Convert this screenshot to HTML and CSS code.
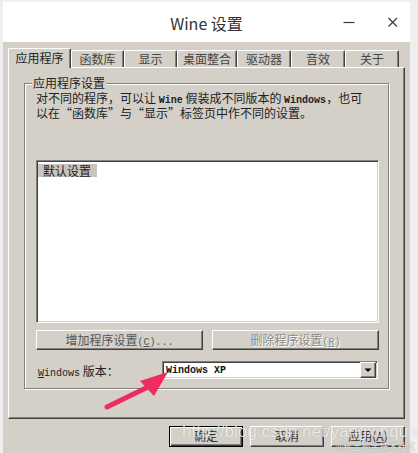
FILE: index.html
```html
<!DOCTYPE html>
<html lang="zh-CN">
<head>
<meta charset="utf-8">
<title>Wine 设置</title>
<link rel="stylesheet" href="styles.css">
</head>
<body>
<div class="window">
  <div class="titlebar">
    <div></div>
    <div class="title">Wine 设置</div>
    <div class="controls">
      <svg class="ctl" width="24" height="24" viewBox="0 0 24 24"><path d="M6.5 12.5H17.5" stroke="#3a3a3a" stroke-width="1.2"/></svg>
      <svg class="ctl" width="24" height="24" viewBox="0 0 24 24"><path d="M7.5 8L16 16.5M16 8L7.5 16.5" stroke="#3a3a3a" stroke-width="1.2"/></svg>
    </div>
  </div>
  <div class="client">
    <div class="tabs">
      <div class="tab active t63">应用程序</div>
      <div class="tab t53">函数库</div>
      <div class="tab t53">显示</div>
      <div class="tab t60">桌面整合</div>
      <div class="tab t54">驱动器</div>
      <div class="tab t54">音效</div>
      <div class="tab t54">关于</div>
    </div>
    <div class="panel">
      <fieldset class="group">
        <legend class="legend">应用程序设置</legend>
        <p class="desc">对不同的程序，可以让 <b class="mono">Wine</b> 假装成不同版本的 <b class="mono">Windows</b>，也可<br>以在“函数库”与“显示”标签页中作不同的设置。</p>
        <div class="listbox"><div class="item sel">默认设置</div></div>
        <div class="btnrow">
          <div class="btn wide">增加程序设置<span class="mono">(<u>C</u>)...</span></div>
          <div class="btn wide disabled">删除程序设置<span class="mono">(<u>R</u>)</span></div>
        </div>
        <div class="verrow">
          <div class="verlabel"><span class="mono"><u>W</u>indows</span> 版本：</div>
          <div class="combo">
            <span class="combotext mono">Windows XP</span>
            <div class="drop"><svg width="14" height="14" viewBox="0 0 14 14"><path d="M3.5 5.5H10.5L7 9Z" fill="#000"/></svg></div>
          </div>
        </div>
      </fieldset>
    </div>
    <div class="footer">
      <div class="btn foot default">确定</div>
      <div class="btn foot">取消</div>
      <div class="btn foot">应用(<u>A</u>)</div>
    </div>
  </div>
  <svg class="arrow" width="418" height="453" viewBox="0 0 418 453">
    <path d="M107 407L150 386" stroke="#ee2c5f" stroke-width="5" stroke-linecap="round"/>
    <path d="M168 372L140 381L154 396Z" fill="#ee2c5f"/>
  </svg>
  <div class="watermark">http://blog.csdn.net/yangxinqun</div>
  <div class="wm2">@稀土掘金技术社区</div>
</div>
</body>
</html>
```
FILE: styles.css
```css
html, body { margin: 0; padding: 0; }
body {
  background: #efefef;
  width: 418px;
  height: 453px;
  overflow: hidden;
  font-family: "Noto Sans CJK SC", "Liberation Sans", sans-serif;
  font-size: 12px;
  color: #222;
}
.window {
  position: relative;
  margin: 2px 0 0 3px;
  width: 407px;
  height: 451px;
  background: #d4d0c8;
}
.titlebar {
  height: 40px;
  background: #fff;
  display: grid;
  grid-template-columns: 1fr auto 1fr;
  align-items: center;
}
.title {
  font-size: 16px;
  color: #333;
  line-height: 20px;
  padding-top: 1px;
}
.controls {
  display: flex;
  justify-content: flex-end;
  gap: 20px;
  padding-right: 5px;
}
.ctl { display: block; }
.client {
  padding: 6px 5px 0 5px;
}
.tabs {
  display: flex;
  align-items: flex-end;
  height: 19px;
}
.tab {
  box-sizing: border-box;
  height: 17px;
  border-top: 1px solid #fff;
  border-left: 1px solid #fff;
  border-right: 1px solid #404040;
  box-shadow: inset -1px 0 #808080;
  border-radius: 2px 2px 0 0;
  text-align: center;
  line-height: 15px;
  color: #444;
  background: #d4d0c8;
}
.tab.active {
  position: relative;
  z-index: 1;
  height: 20px;
  margin-bottom: -1px;
  line-height: 18px;
  color: #222;
}
.t63 { width: 63px; }
.t53 { width: 53px; }
.t54 { width: 54px; }
.t60 { width: 60px; }
.panel {
  box-sizing: border-box;
  width: 397px;
  height: 352px;
  border-top: 1px solid #fff;
  border-left: 1px solid #fff;
  border-right: 1px solid #404040;
  border-bottom: 1px solid #404040;
  box-shadow: inset -1px -1px #808080;
  padding: 8px 0 0 15px;
}
.group {
  box-sizing: border-box;
  width: 365px;
  margin: 0;
  min-width: 0;
  border: 1px solid #808080;
  box-shadow: inset 1px 1px #fff, 1px 1px 0 #fff;
  padding: 2px 9px 9px 11px;
}
.legend {
  padding: 0 1px;
  margin-left: -4px;
  line-height: 14px;
  background: #d4d0c8;
  color: #222;
}
.desc {
  margin: 0;
  line-height: 12px;
  height: 24px;
  white-space: nowrap;
  color: #222;
}
.mono {
  font-family: "Liberation Mono", monospace;
  font-size: 10px;
}
b.mono { font-weight: bold; }
.listbox {
  box-sizing: border-box;
  margin-top: 44px;
  height: 163px;
  background: #fff;
  border-top: 1px solid #808080;
  border-left: 1px solid #808080;
  border-right: 1px solid #fff;
  border-bottom: 1px solid #fff;
  box-shadow: inset 1px 1px #404040, inset -1px -1px #d4d0c8;
  padding: 1px 0 0 1px;
}
.item {
  display: inline-block;
  line-height: 13px;
  padding: 0 6px 0 5px;
}
.item.sel { background: #c9c5bd; color: #222; }
.btnrow {
  display: flex;
  gap: 9px;
  margin-top: 7px;
}
.btn {
  box-sizing: border-box;
  background: #d4d0c8;
  border: 1px solid;
  border-color: #fff #404040 #404040 #fff;
  box-shadow: inset -1px -1px #808080;
  text-align: center;
  color: #333;
}
.btn.wide {
  flex: 1;
  height: 20px;
  line-height: 17px;
  color: #555;
}
.btn.disabled {
  color: #8c8a86;
  text-shadow: 1px 1px 0 #fff;
}
.verrow {
  display: grid;
  grid-template-columns: 126px 216px;
  align-items: center;
  margin-top: 11px;
}
.verlabel {
  padding-left: 2px;
  color: #222;
}
.combo {
  box-sizing: border-box;
  height: 18px;
  background: #fff;
  border-top: 1px solid #808080;
  border-left: 1px solid #808080;
  border-right: 1px solid #fff;
  border-bottom: 1px solid #fff;
  box-shadow: inset 1px 1px #404040, inset -1px -1px #d4d0c8;
  display: flex;
  align-items: center;
  padding: 1px 1px 1px 3px;
}
.combotext {
  flex: 1;
  font-weight: bold;
  color: #111;
}
.drop {
  box-sizing: border-box;
  width: 16px;
  height: 16px;
  background: #d4d0c8;
  border: 1px solid;
  border-color: #fff #404040 #404040 #fff;
  box-shadow: inset -1px -1px #808080;
  display: flex;
  align-items: center;
  justify-content: center;
}
.drop svg { display: block; }
.footer {
  display: flex;
  justify-content: flex-end;
  gap: 7px;
  margin-top: 7px;
}
.btn.foot {
  width: 74px;
  height: 21px;
  line-height: 18px;
}
.btn.default {
  border-color: #000;
  box-shadow: inset 1px 1px #fff, inset -1px -1px #404040, inset -2px -2px #808080;
}
.arrow {
  position: absolute;
  left: -3px;
  top: -2px;
  pointer-events: none;
}
.watermark {
  position: absolute;
  left: 179px;
  top: 420px;
  font-family: "Liberation Sans", Arial, sans-serif;
  font-size: 17px;
  line-height: 20px;
  color: rgba(255, 255, 255, 0.78);
  text-shadow: 0 0 1px rgba(0, 0, 0, 0.25);
  white-space: nowrap;
}
.wm2 {
  position: absolute;
  left: 332px;
  top: 440px;
  font-size: 9px;
  line-height: 10px;
  color: rgba(255, 255, 255, 0.85);
  text-shadow: 0 0 1px rgba(0, 0, 0, 0.45);
  white-space: nowrap;
}
```
